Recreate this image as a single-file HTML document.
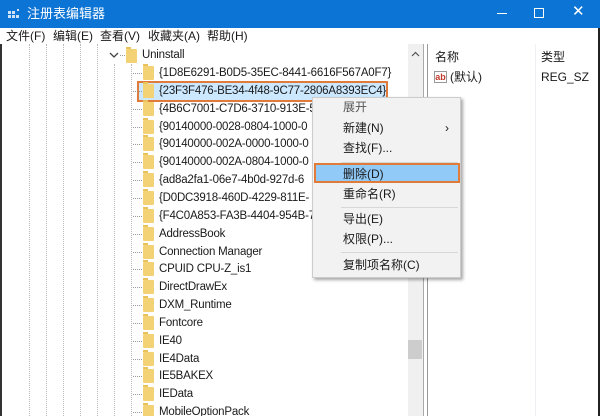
<!DOCTYPE html>
<html><head><meta charset="utf-8"><style>
*{margin:0;padding:0;box-sizing:border-box}
html,body{width:600px;height:416px;overflow:hidden}
body{background:#fff;font-family:"Liberation Sans","Noto Sans CJK SC",sans-serif;font-size:12px;color:#1a1a1a;position:relative}
.abs{position:absolute}
.title{left:0;top:0;width:600px;height:28px;background:#0b74d4;color:#fff}
.menu span{position:absolute;top:28px;line-height:16px;font-size:12px}
.row{position:absolute;height:18px;line-height:18px;white-space:nowrap;font-size:11.5px;letter-spacing:-0.2px}
.fold{position:absolute;width:11px;height:14px;background:#f3d175;border-radius:1px}
.fold:before{content:"";position:absolute;left:0;top:-2px;width:5px;height:2px;background:#e9c25c}
.vd{position:absolute;top:44px;height:372px;border-left:1px dotted #b8b8b8;width:0}
.hd{position:absolute;width:9px;border-top:1px dotted #9a9a9a;height:0}
.cm{left:312px;top:97px;width:149px;height:181px;background:#f2f2f2;border:1px solid #ccc;box-shadow:2px 2px 3px rgba(0,0,0,.35)}
.cm div{position:absolute;left:30px;font-size:12px;line-height:16px}
.sep{position:absolute;left:28px;right:2px;border-top:1px solid #d7d7d7;height:0}
</style></head><body>
<div class="abs title">
<svg class="abs" style="left:8px;top:9px" width="12" height="11"><g fill="#cfe3f7"><rect x="0" y="2" width="3" height="3"/><rect x="4" y="2" width="3" height="3"/><rect x="0" y="6" width="3" height="3"/><rect x="4" y="6" width="3" height="3"/><rect x="8" y="6" width="3" height="3"/><rect x="9" y="0" width="2" height="2"/></g></svg>
<div class="abs" style="left:27px;top:6px;font-size:13px;line-height:16px">注册表编辑器</div>
<div class="abs" style="left:497px;top:13px;width:10px;border-top:1px solid #fff"></div>
<div class="abs" style="left:534px;top:8px;width:10px;height:10px;border:1px solid #fff"></div>
<div class="abs" style="left:572px;top:3px;font-size:15px;line-height:18px">✕</div>
</div>
<div class="menu"><span style="left:6px">文件(F)</span><span style="left:53px">编辑(E)</span><span style="left:100px">查看(V)</span><span style="left:148px">收藏夹(A)</span><span style="left:207px">帮助(H)</span></div>
<div class="abs" style="left:0;top:44px;width:2px;height:372px;background:#333"></div>
<div class="abs" style="left:598px;top:28px;width:2px;height:388px;background:#222"></div>
<div class="vd" style="left:29px"></div><div class="vd" style="left:46px"></div><div class="vd" style="left:63px"></div><div class="vd" style="left:80px"></div><div class="vd" style="left:97px"></div><div class="vd" style="left:114px;top:64px"></div><div class="vd" style="left:131px;top:64px"></div>
<!-- selection -->
<div class="abs" style="left:137px;top:81px;width:251px;height:21px;border:2px solid #e07b39;background:#cce8ff"></div>
<!-- Uninstall -->
<svg class="abs" style="left:109px;top:51px" width="10" height="8"><path d="M1 2 L5 6 L9 2" stroke="#444" stroke-width="1.3" fill="none"/></svg>
<div class="hd" style="left:120px;top:55px;width:5px"></div>
<div class="fold" style="left:126px;top:49px"></div>
<div class="row" style="left:142px;top:46px">Uninstall</div>
<div id="tree"></div>
<script>
var items=["{1D8E6291-B0D5-35EC-8441-6616F567A0F7}","{23F3F476-BE34-4f48-9C77-2806A8393EC4}","{4B6C7001-C7D6-3710-913E-5","{90140000-0028-0804-1000-0","{90140000-002A-0000-1000-0","{90140000-002A-0804-1000-0","{ad8a2fa1-06e7-4b0d-927d-6","{D0DC3918-460D-4229-811E-","{F4C0A853-FA3B-4404-954B-7","AddressBook","Connection Manager","CPUID CPU-Z_is1","DirectDrawEx","DXM_Runtime","Fontcore","IE40","IE4Data","IE5BAKEX","IEData","MobileOptionPack"];
var h="";for(var i=0;i<items.length;i++){var y=64+i*17.85;h+='<div class="hd" style="left:133px;top:'+(y+9)+'px"></div><div class="fold" style="left:143px;top:'+(y+2)+'px"></div><div class="row" style="left:159px;top:'+y+'px">'+items[i]+'</div>';}
document.getElementById("tree").outerHTML=h;
</script>
<!-- scrollbar -->
<div class="abs" style="left:408px;top:44px;width:15px;height:372px;background:#f0f0f0"></div>
<svg class="abs" style="left:411px;top:51px" width="9" height="6"><path d="M1 5 L4.5 1.5 L8 5" stroke="#555" stroke-width="1.2" fill="none"/></svg>
<div class="abs" style="left:408px;top:340px;width:14px;height:19px;background:#cdcdcd"></div>
<div class="abs" style="left:423px;top:44px;width:1px;height:372px;background:#aaa"></div>
<div class="abs" style="left:427px;top:44px;width:1px;height:372px;background:#999"></div>
<div class="abs" style="left:535px;top:44px;width:1px;height:372px;background:#eef0f4"></div>
<div class="abs" style="left:435px;top:50px;line-height:14px">名称</div>
<div class="abs" style="left:541px;top:50px;line-height:14px">类型</div>
<div class="abs" style="left:434px;top:71px;width:13px;height:12px;border:1px solid #999;font-size:9px;line-height:10px;color:#c0392b;text-align:center;font-weight:bold;background:#fff">ab</div>
<div class="abs" style="left:450px;top:70px;line-height:14px">(默认)</div>
<div class="abs" style="left:541px;top:70px;line-height:14px">REG_SZ</div>
<!-- context menu -->
<div class="abs cm">
<div style="top:1px;color:#555">展开</div>
<div style="top:22px">新建(N)</div><div style="top:22px;left:132px">›</div>
<div style="top:42px">查找(F)...</div>
<span class="sep" style="top:64px"></span>
<span class="abs" style="left:1px;top:65px;width:146px;height:20px;background:#91c9f7;border:2px solid #e07b39"></span>
<div style="top:68px">删除(D)</div>
<div style="top:88px">重命名(R)</div>
<span class="sep" style="top:109px"></span>
<div style="top:113px">导出(E)</div>
<div style="top:133px">权限(P)...</div>
<span class="sep" style="top:154px"></span>
<div style="top:159px">复制项名称(C)</div>
</div>
</body></html>
